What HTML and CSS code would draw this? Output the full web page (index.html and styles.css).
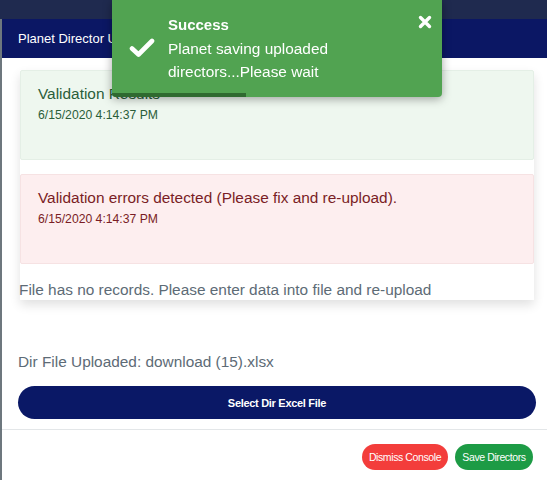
FILE: index.html
```html
<!DOCTYPE html>
<html>
<head>
<meta charset="utf-8">
<link rel="stylesheet" href="styles.css">
</head>
<body>
<div class="backdrop">
  <div class="modal">
    <div class="modal-header">Planet Director Upload</div>
    <div class="modal-body">
      <div class="console">
        <div class="panel panel-success">
          <div class="panel-title">Validation Results</div>
          <div class="panel-date">6/15/2020 4:14:37 PM</div>
        </div>
        <div class="panel panel-error">
          <div class="panel-title">Validation errors detected (Please fix and re-upload).</div>
          <div class="panel-date">6/15/2020 4:14:37 PM</div>
        </div>
        <div class="console-msg">File has no records. Please enter data into file and re-upload</div>
      </div>
      <div class="uploaded">Dir File Uploaded: download (15).xlsx</div>
      <button class="select-btn">Select Dir Excel File</button>
    </div>
    <div class="modal-footer">
      <button class="pill pill-red">Dismiss Console</button>
      <button class="pill pill-green">Save Directors</button>
    </div>
  </div>
</div>

<div class="toast">
  <svg class="toast-icon" width="26" height="20" viewBox="0 0 26 20">
    <polyline points="3,10.5 9.5,16.5 23,3" fill="none" stroke="#fff" stroke-width="4.6" stroke-linecap="round" stroke-linejoin="round"/>
  </svg>
  <div class="toast-text">
    <div class="toast-title">Success</div>
    <div class="toast-msg">Planet saving uploaded directors...Please wait</div>
  </div>
  <svg class="toast-close" width="14" height="14" viewBox="0 0 14 14">
    <path d="M2.5 2.5 L11.5 11.5 M11.5 2.5 L2.5 11.5" stroke="#fff" stroke-width="3.4" stroke-linecap="round"/>
  </svg>
  <div class="toast-progress"></div>
</div>
</body>
</html>
```

FILE: styles.css
```css
html, body {
  margin: 0;
  padding: 0;
  height: 100%;
  overflow: hidden;
}
body {
  font-family: "Liberation Sans", Arial, sans-serif;
  background: #6d777e;
}
.backdrop {
  height: 100%;
  padding-top: 19px;
  padding-left: 2px;
  box-sizing: border-box;
  background: linear-gradient(#1f2a4f 0, #1f2a4f 19px, transparent 19px);
}
.modal {
  background: #fff;
  height: 100%;
}
.modal-header {
  height: 39px;
  background: #0b1764;
  color: #fff;
  font-size: 13px;
  line-height: 40px;
  padding-left: 16px;
  white-space: nowrap;
  overflow: hidden;
}
.modal-body {
  padding: 12px 11px 0 16px;
}
.console {
  margin: 0 2px;
  box-shadow: 0 5px 10px rgba(0,0,0,0.12);
  display: flex;
  flex-direction: column;
  height: 230px;
}
.panel {
  height: 90px;
  box-sizing: border-box;
  padding: 12px 17px;
  border-radius: 2px;
}
.panel-error {
  margin-top: 14px;
}
.panel-title {
  font-size: 15.4px;
  line-height: 22px;
}
.panel-date {
  font-size: 12.2px;
  line-height: 14px;
  margin-top: 3px;
}
.panel-success {
  background: #eef7ef;
  color: #2b5e3a;
  border: 1px solid #e4efe6;
}
.panel-error {
  background: #fdeeef;
  color: #7a1d25;
  border: 1px solid #f6e2e3;
}
.console-msg {
  font-size: 15.4px;
  line-height: 18px;
  color: #5d6b76;
  margin-left: -1px;
  margin-top: 17px;
  white-space: nowrap;
}
.uploaded {
  margin-top: 53px;
  font-size: 15.4px;
  line-height: 18px;
  color: #5d6b76;
}
.select-btn {
  display: block;
  width: 100%;
  margin-top: 15px;
  height: 33px;
  border: none;
  border-radius: 17px;
  background: #0a1866;
  color: #fff;
  font-family: "Liberation Sans", Arial, sans-serif;
  font-size: 11px;
  font-weight: bold;
  letter-spacing: -0.3px;
}
.modal-footer {
  margin-top: 10px;
  border-top: 1px solid #e3e6e8;
  display: flex;
  justify-content: flex-end;
  gap: 7px;
  padding: 14px 14px 0 0;
}
.pill {
  height: 26px;
  border: none;
  border-radius: 13px;
  color: #fff;
  font-family: "Liberation Sans", Arial, sans-serif;
  font-size: 10.5px;
  padding: 0;
  letter-spacing: -0.4px;
  white-space: nowrap;
}
.pill-red {
  background: #f33d3b;
  width: 86px;
}
.pill-green {
  background: #1d9b45;
  width: 78px;
}
.toast {
  position: fixed;
  top: 0;
  left: 112px;
  width: 330px;
  height: 97px;
  box-sizing: border-box;
  background: #51a351;
  border-radius: 0 0 4px 4px;
  box-shadow: 0 2px 10px rgba(0,0,0,0.35);
  display: flex;
  align-items: flex-start;
  padding: 16px 0 0 17px;
  color: #fff;
  overflow: hidden;
}
.toast-icon {
  margin-top: 22px;
  flex: none;
}
.toast-text {
  margin-left: 13px;
  width: 222px;
}
.toast-title {
  font-weight: bold;
  font-size: 15px;
  line-height: 18px;
}
.toast-msg {
  font-size: 15.4px;
  line-height: 23px;
  margin-top: 3px;
}
.toast-close {
  margin-left: 28px;
  margin-top: -1px;
  flex: none;
}
.toast-progress {
  position: absolute;
  left: 0;
  bottom: 0;
  width: 134px;
  height: 4px;
  background: #2f6a30;
}
```
